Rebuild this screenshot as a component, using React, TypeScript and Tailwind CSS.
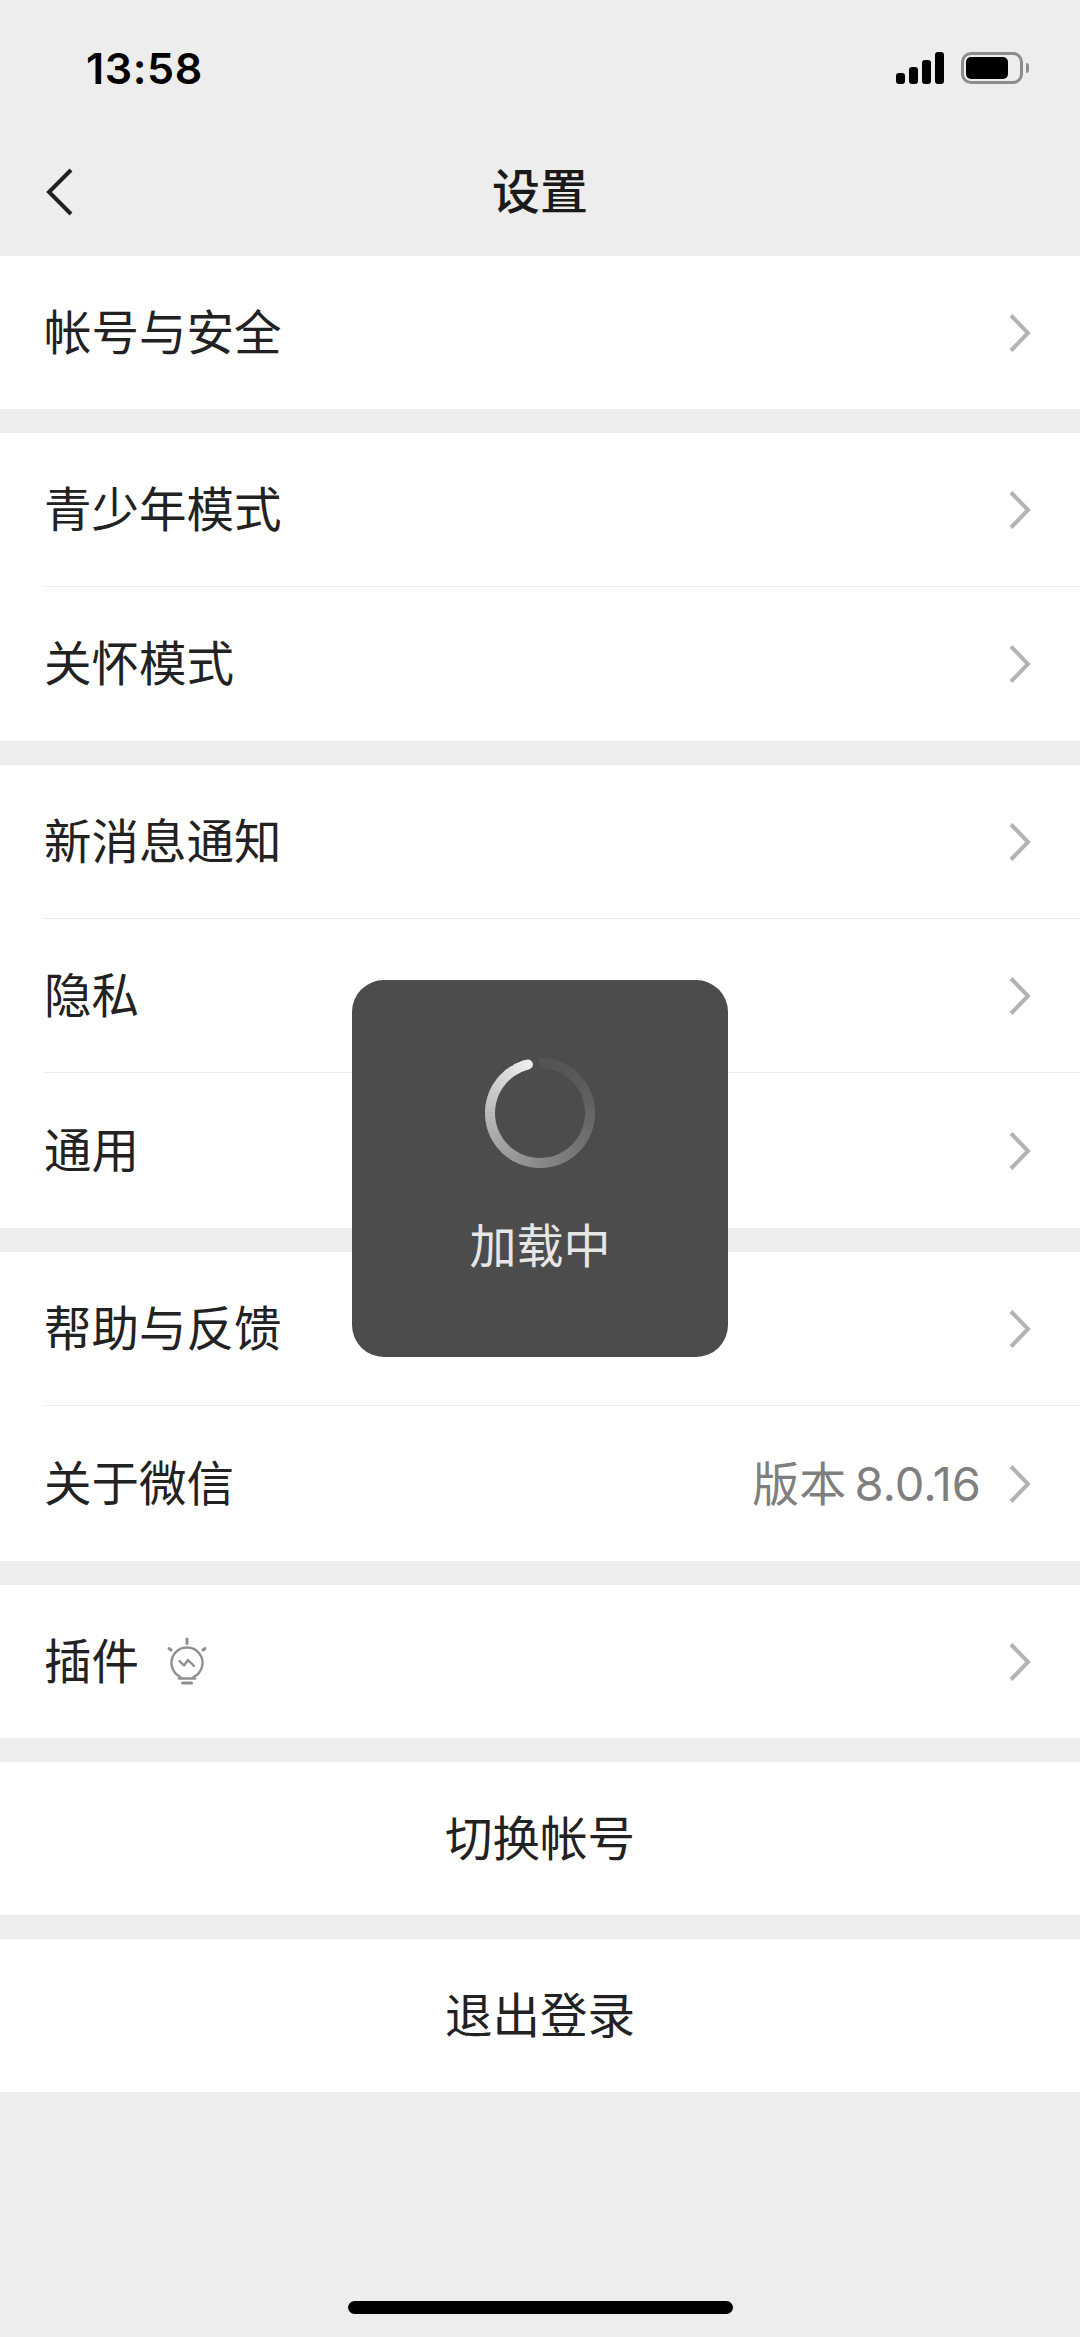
import React from "react";

const Chevron = () => (
  <svg width="24" height="40" viewBox="0 0 24 40" className="shrink-0" fill="none">
    <path d="M3 2.5 L20 20 L3 37.5" stroke="#b3b3b3" strokeWidth="4" strokeLinecap="butt" strokeLinejoin="miter" />
  </svg>
);

const Bulb = () => (
  <svg width="44" height="50" viewBox="0 0 44 50" fill="none" stroke="#8f8f8f" strokeWidth="2.4" strokeLinecap="round" className="ml-[26px] shrink-0">
    <path d="M22 2 V6.5" strokeWidth="3" />
    <path d="M4 11.5 L6 13" strokeWidth="3" />
    <path d="M40 11.5 L38 13" strokeWidth="3" />
    <path d="M15.5 40 A15.5 15.5 0 1 1 28.5 40" />
    <path d="M14.5 24 L19 28.5 L23 23 L29 29" strokeLinejoin="round" />
    <path d="M14 41.5 H30" strokeWidth="2.6" />
    <path d="M17.5 46 H26.5" strokeWidth="3" />
  </svg>
);

const Row = ({
  label,
  value,
  divider,
  tall,
  single,
  icon,
}: {
  label: string;
  value?: string;
  divider?: boolean;
  tall?: boolean;
  single?: boolean;
  icon?: React.ReactNode;
}) => (
  <div className={`${single ? "h-[153px]" : tall ? "h-[155px]" : "h-[154px]"} pl-[44px] bg-white`}>
    <div className={`h-full flex items-center pr-[48px] ${divider ? "border-b border-[#ececec]" : ""}`}>
      <span className="text-[47.5px] leading-none text-[#222222]">{label}</span>
      {icon}
      <span className="flex-1" />
      {value && <span className="text-[47px] leading-none text-[#7f7f7f] mr-[27px] [word-spacing:-5px]">{value}</span>}
      <Chevron />
    </div>
  </div>
);

const ActionRow = ({ label }: { label: string }) => (
  <div className="h-[153px] bg-white flex items-center justify-center text-[47.5px] leading-none text-[#222222]">{label}</div>
);

const Group = ({ children }: { children: React.ReactNode }) => <div className="flex flex-col">{children}</div>;

const Spinner = () => {
  const cx = 60;
  const cy = 60;
  const r = 50;
  const n = 120;
  const segs = Array.from({ length: n }, (_, i) => {
    // start at the head (about -12deg from top), sweep counter-clockwise
    const a0 = (-14 - (i / n) * 346) * (Math.PI / 180);
    const a1 = (-14 - ((i + 1.3) / n) * 346) * (Math.PI / 180);
    const t = i / (n - 1);
    const v = Math.round(84 + 152 * Math.pow(1 - t, 1.6));
    return {
      d: `M${cx + r * Math.sin(a0)} ${cy - r * Math.cos(a0)} A${r} ${r} 0 0 0 ${cx + r * Math.sin(a1)} ${cy - r * Math.cos(a1)}`,
      c: `rgb(${v},${v},${v})`,
    };
  });
  const head = (-14 * Math.PI) / 180;
  return (
    <svg width="120" height="120" viewBox="0 0 120 120" fill="none">
      {segs.map((s, i) => (
        <path key={i} d={s.d} stroke={s.c} strokeWidth="10" />
      ))}
      <circle cx={cx + r * Math.sin(head)} cy={cy - r * Math.cos(head)} r="5" fill="#ececec" />
    </svg>
  );
};

export default function App() {
  return (
    <div className="relative w-[1080px] h-[2337px] overflow-hidden bg-[#ededed] font-['Inter','Noto_Sans_CJK_SC',sans-serif]">
      {/* status bar */}
      <div className="h-[128px] flex items-start justify-between pt-[42px] pl-[86px] pr-[51px]">
        <span className="text-[43px] leading-[52px] font-semibold text-black tracking-[0.6px]">13:58</span>
        <div className="flex items-center gap-[17px] pt-[10px]">
          <div className="flex items-end gap-[4px] h-[32px]">
            <div className="w-[9px] h-[11px] rounded-[3px] bg-black" />
            <div className="w-[9px] h-[17px] rounded-[3px] bg-black" />
            <div className="w-[9px] h-[24px] rounded-[3px] bg-black" />
            <div className="w-[9px] h-[32px] rounded-[3px] bg-black" />
          </div>
          <div className="flex items-center gap-[3px]">
            <div className="w-[62px] h-[32px] rounded-[10px] border-[3px] border-[#8c8c8c] p-[2px] flex">
              <div className="w-[42px] h-full rounded-[5px] bg-black" />
            </div>
            <div className="w-[3px] h-[10px] rounded-r-[3px] bg-[#8c8c8c]" />
          </div>
        </div>
      </div>
      {/* nav */}
      <div className="h-[128px] relative flex items-center justify-center">
        <svg width="30" height="50" viewBox="0 0 30 50" fill="none" className="absolute left-[45px] top-[39px]">
          <path d="M26 3 L4 25 L26 47" stroke="#222222" strokeWidth="4" strokeLinejoin="miter" strokeLinecap="butt" />
        </svg>
        <span className="text-[48px] leading-none font-medium text-[#1a1a1a]">设置</span>
      </div>
      {/* list */}
      <div className="flex flex-col gap-[24px]">
        <Group>
          <Row label="帐号与安全" single />
        </Group>
        <Group>
          <Row label="青少年模式" divider />
          <Row label="关怀模式" />
        </Group>
        <Group>
          <Row label="新消息通知" divider />
          <Row label="隐私" divider />
          <Row label="通用" tall />
        </Group>
        <Group>
          <Row label="帮助与反馈" divider />
          <Row label="关于微信" value="版本 8.0.16" tall />
        </Group>
        <Group>
          <Row label="插件" icon={<Bulb />} single />
        </Group>
        <Group>
          <ActionRow label="切换帐号" />
        </Group>
        <Group>
          <ActionRow label="退出登录" />
        </Group>
      </div>
      {/* toast */}
      <div className="absolute left-[352px] top-[980px] w-[376px] h-[377px] rounded-[32px] bg-[#4c4c4c] flex flex-col items-center pt-[73px]">
        <Spinner />
        <span className="mt-[49px] text-[47px] leading-none font-normal text-[#e6e6e6]">加载中</span>
      </div>
      {/* home indicator */}
      <div className="absolute left-[348px] top-[2301px] w-[385px] h-[13px] rounded-full bg-black" />
    </div>
  );
}
